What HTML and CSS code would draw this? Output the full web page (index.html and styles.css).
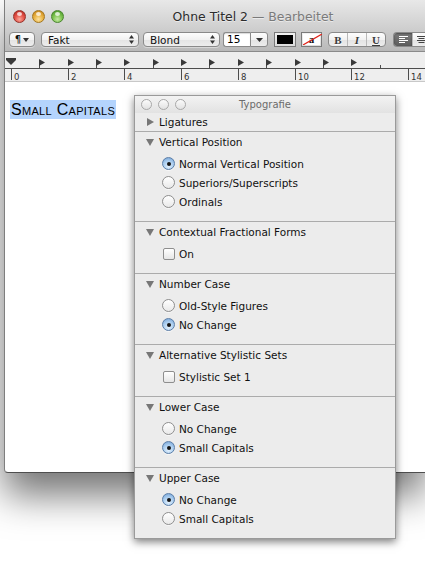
FILE: index.html
```html
<!DOCTYPE html>
<html lang="de">
<head>
<meta charset="utf-8">
<title>Ohne Titel 2 — Bearbeitet</title>
<link rel="stylesheet" href="styles.css">
</head>
<body>
<div class="desktop">
  <div class="window">
    <div class="chrome">
      <div class="titlebar">
        <div class="lights"><span class="light red"></span><span class="light yellow"></span><span class="light green"></span></div>
        <div class="title">Ohne Titel 2 <span class="edited">— Bearbeitet</span></div>
      </div>
      <div class="toolbar">
        <div class="btn para">¶<svg class="caret" width="6" height="4" viewBox="0 0 6 4"><polygon points="0,0 6,0 3,4" fill="#333"/></svg></div>
        <div class="btn popup fam"><span>Fakt</span><svg class="updown" width="5" height="9" viewBox="0 0 5 9"><polygon points="0,3.5 2.5,0 5,3.5" fill="#333"/><polygon points="0,5.5 5,5.5 2.5,9" fill="#333"/></svg></div>
        <div class="btn popup sty"><span>Blond</span><svg class="updown" width="5" height="9" viewBox="0 0 5 9"><polygon points="0,3.5 2.5,0 5,3.5" fill="#333"/><polygon points="0,5.5 5,5.5 2.5,9" fill="#333"/></svg></div>
        <div class="combo"><span class="combo-field">15</span><span class="combo-btn"><svg width="7" height="4" viewBox="0 0 7 4"><polygon points="0,0 7,0 3.5,4" fill="#333"/></svg></span></div>
        <div class="well well-black"><span class="swatch"></span></div>
        <div class="well well-none"><span class="swatch-none">a<svg class="slash" width="19" height="11" viewBox="0 0 19 11"><line x1="0" y1="11" x2="19" y2="0" stroke="#e2241b" stroke-width="1.2"/></svg></span></div>
        <div class="seg biu"><span class="b">B</span><span class="i">I</span><span class="u">U</span></div>
        <div class="seg align">
          <span class="on"><svg width="9" height="7" viewBox="0 0 9 7"><g fill="#fff"><rect x="0" y="0" width="9" height="1"/><rect x="0" y="2" width="6" height="1"/><rect x="0" y="4" width="9" height="1"/><rect x="0" y="6" width="6" height="1"/></g></svg></span>
          <span><svg width="9" height="7" viewBox="0 0 9 7"><g fill="#444"><rect x="0" y="0" width="9" height="1"/><rect x="1.5" y="2" width="6" height="1"/><rect x="0" y="4" width="9" height="1"/><rect x="1.5" y="6" width="6" height="1"/></g></svg></span>
        </div>
      </div>
    </div>
    <div class="ruler">
      <svg width="420" height="29" viewBox="0 0 420 29">
        <line x1="0" y1="16.5" x2="420" y2="16.5" stroke="#4d4d4d" stroke-width="1"/>
        <g stroke="#4d4d4d" stroke-width="1">
          <line x1="6.5" y1="16" x2="6.5" y2="28"/>
          <line x1="63.5" y1="16" x2="63.5" y2="28"/>
          <line x1="119.5" y1="16" x2="119.5" y2="28"/>
          <line x1="176.5" y1="16" x2="176.5" y2="28"/>
          <line x1="233.5" y1="16" x2="233.5" y2="28"/>
          <line x1="290.5" y1="16" x2="290.5" y2="28"/>
          <line x1="346.5" y1="16" x2="346.5" y2="28"/>
          <line x1="403.5" y1="16" x2="403.5" y2="28"/>
          <line x1="34.5" y1="13" x2="34.5" y2="16"/>
          <line x1="91.5" y1="13" x2="91.5" y2="16"/>
          <line x1="148.5" y1="13" x2="148.5" y2="16"/>
          <line x1="204.5" y1="13" x2="204.5" y2="16"/>
          <line x1="261.5" y1="13" x2="261.5" y2="16"/>
          <line x1="318.5" y1="13" x2="318.5" y2="16"/>
          <line x1="375.5" y1="13" x2="375.5" y2="16"/>
        </g>
        <g class="ruler-num">
          <text x="9" y="28">0</text>
          <text x="66" y="28">2</text>
          <text x="122" y="28">4</text>
          <text x="179" y="28">6</text>
          <text x="236" y="28">8</text>
          <text x="293" y="28">10</text>
          <text x="349" y="28">12</text>
          <text x="406" y="28">14</text>
        </g>
        <g fill="#3a3a3a">
          <rect x="1" y="6" width="10" height="2"/>
          <polygon points="1,8 11,8 6,13"/>
          <polygon points="34,7 40,10.5 34,14"/>
          <polygon points="63,7 69,10.5 63,14"/>
          <polygon points="91,7 97,10.5 91,14"/>
          <polygon points="119,7 125,10.5 119,14"/>
          <polygon points="148,7 154,10.5 148,14"/>
          <polygon points="176,7 182,10.5 176,14"/>
          <polygon points="204,7 210,10.5 204,14"/>
          <polygon points="233,7 239,10.5 233,14"/>
          <polygon points="261,7 267,10.5 261,14"/>
          <polygon points="290,7 296,10.5 290,14"/>
          <polygon points="318,7 324,10.5 318,14"/>
          <polygon points="346,7 352,10.5 346,14"/>
        </g>
      </svg>
    </div>
    <div class="doc"><span class="smallcaps">Small Capitals</span></div>
  </div>
</div>

<div class="panel">
  <div class="ptitlebar">
    <div class="plights"><span></span><span></span><span></span></div>
    <div class="ptitle">Typografie</div>
    <div class="pspacer"></div>
  </div>
  <div class="lig">
    <svg class="tri" width="8" height="8" viewBox="0 0 8 8"><polygon points="1,0 8,4 1,8"/></svg>Ligatures
  </div>
  <div class="section">
    <div class="shead"><svg class="tri" width="8" height="8" viewBox="0 0 8 8"><polygon points="0,1 8,1 4,8"/></svg>Vertical Position</div>
    <div class="opts">
      <div class="opt"><span class="radio on"></span>Normal Vertical Position</div>
      <div class="opt"><span class="radio"></span>Superiors/Superscripts</div>
      <div class="opt"><span class="radio"></span>Ordinals</div>
    </div>
  </div>
  <div class="section">
    <div class="shead"><svg class="tri" width="8" height="8" viewBox="0 0 8 8"><polygon points="0,1 8,1 4,8"/></svg>Contextual Fractional Forms</div>
    <div class="opts">
      <div class="opt"><span class="check"></span>On</div>
    </div>
  </div>
  <div class="section">
    <div class="shead"><svg class="tri" width="8" height="8" viewBox="0 0 8 8"><polygon points="0,1 8,1 4,8"/></svg>Number Case</div>
    <div class="opts">
      <div class="opt"><span class="radio"></span>Old-Style Figures</div>
      <div class="opt"><span class="radio on"></span>No Change</div>
    </div>
  </div>
  <div class="section">
    <div class="shead"><svg class="tri" width="8" height="8" viewBox="0 0 8 8"><polygon points="0,1 8,1 4,8"/></svg>Alternative Stylistic Sets</div>
    <div class="opts">
      <div class="opt"><span class="check"></span>Stylistic Set 1</div>
    </div>
  </div>
  <div class="section">
    <div class="shead"><svg class="tri" width="8" height="8" viewBox="0 0 8 8"><polygon points="0,1 8,1 4,8"/></svg>Lower Case</div>
    <div class="opts">
      <div class="opt"><span class="radio"></span>No Change</div>
      <div class="opt"><span class="radio on"></span>Small Capitals</div>
    </div>
  </div>
  <div class="section">
    <div class="shead"><svg class="tri" width="8" height="8" viewBox="0 0 8 8"><polygon points="0,1 8,1 4,8"/></svg>Upper Case</div>
    <div class="opts">
      <div class="opt"><span class="radio on"></span>No Change</div>
      <div class="opt"><span class="radio"></span>Small Capitals</div>
    </div>
  </div>
</div>
</body>
</html>
```

FILE: styles.css
```css
* { box-sizing: border-box; }

body {
  margin: 0;
  width: 425px;
  height: 566px;
  overflow: hidden;
  background: #ffffff;
  position: relative;
  font-family: "DejaVu Sans", "Noto Sans", sans-serif;
  color: #000;
}

.desktop {
  padding-left: 4px;
}

.window {
  width: 421px;
  height: 473px;
  border: 1px solid #7e7e7e;
  border-top: none;
  border-right: none;
  border-bottom-color: #4e4e4e;
  border-radius: 0 0 0 4px;
  display: flex;
  flex-direction: column;
  background: #fff;
  box-shadow: 0 22px 38px rgba(0, 0, 0, 0.55);
  overflow: hidden;
}

.chrome {
  height: 52px;
  flex: none;
  background: linear-gradient(#e8e8e8, #cfcfcf 55%, #b9b9b9);
  border-bottom: 1px solid #8b8b8b;
}

.titlebar {
  height: 27px;
  padding-top: 5px;
  display: flex;
  align-items: center;
}

.lights {
  width: 59px;
  padding-left: 8px;
  display: flex;
  gap: 6px;
  flex: none;
}

.light {
  width: 13px;
  height: 13px;
  border-radius: 50%;
  position: relative;
}

.light::after {
  content: "";
  position: absolute;
  left: 3px;
  top: 1px;
  width: 5px;
  height: 4px;
  border-radius: 50%;
  background: rgba(255, 255, 255, 0.75);
}

.light.red {
  background: radial-gradient(circle at 50% 75%, #f9a89a 0%, #e6554a 45%, #b92a22 90%);
  border: 1px solid #963129;
}

.light.yellow {
  background: radial-gradient(circle at 50% 75%, #fbe2a0 0%, #eab444 45%, #c7851a 90%);
  border: 1px solid #a3761f;
}

.light.green {
  background: radial-gradient(circle at 50% 75%, #c6eaa6 0%, #80c552 45%, #4a9a28 90%);
  border: 1px solid #4b8630;
}

.title {
  flex: 1;
  text-align: center;
  padding-left: 17px;
  font-size: 12.4px;
  color: #2b2b2b;
  text-shadow: 0 1px 0 rgba(255, 255, 255, 0.5);
  white-space: nowrap;
}

.edited {
  color: #7a7a7a;
}

.toolbar {
  height: 24px;
  display: flex;
  align-items: flex-start;
  padding: 5px 0 0 4px;
  font-size: 10.5px;
  overflow: hidden;
}

.btn {
  height: 15px;
  border: 1px solid #8a8a8a;
  border-radius: 4px;
  background: linear-gradient(#fdfdfd, #f2f2f2 50%, #e3e3e3 51%, #ededed);
  box-shadow: 0 1px 0 rgba(255, 255, 255, 0.4);
  display: flex;
  align-items: center;
  color: #111;
  flex: none;
}

.para {
  width: 26px;
  justify-content: center;
  gap: 2px;
  font-size: 10px;
}

.popup {
  justify-content: space-between;
  padding: 0 4px 0 6px;
}

.fam {
  width: 98px;
  margin-left: 6px;
}

.sty {
  width: 77px;
  margin-left: 4px;
}

.combo {
  margin-left: 3px;
  display: flex;
  height: 15px;
  flex: none;
}

.combo-field {
  width: 27px;
  height: 15px;
  border: 1px solid #8a8a8a;
  border-right: none;
  border-radius: 3px 0 0 3px;
  background: #fff;
  box-shadow: inset 0 1px 1px rgba(0, 0, 0, 0.15);
  padding-left: 3px;
  line-height: 13px;
}

.combo-btn {
  width: 18px;
  height: 15px;
  border: 1px solid #8a8a8a;
  border-radius: 0 3px 3px 0;
  background: linear-gradient(#fdfdfd, #f2f2f2 50%, #e3e3e3 51%, #ededed);
  display: flex;
  align-items: center;
  justify-content: center;
}

.well {
  height: 15px;
  border: 1px solid #7a7a7a;
  background: linear-gradient(#f2f2f2, #dcdcdc);
  padding: 2px;
  display: flex;
  flex: none;
}

.well-black {
  width: 22px;
  margin-left: 6px;
}

.swatch {
  flex: 1;
  background: #000;
}

.well-none {
  width: 21px;
  margin-left: 5px;
  padding: 1px;
}

.swatch-none {
  flex: 1;
  background: #fff;
  position: relative;
  text-align: center;
  font-family: "Liberation Serif", serif;
  font-weight: bold;
  font-size: 11px;
  line-height: 11px;
  color: #111;
}

.slash {
  position: absolute;
  left: 0;
  top: 0;
}

.seg {
  height: 15px;
  border: 1px solid #8a8a8a;
  border-radius: 4px;
  background: linear-gradient(#fdfdfd, #f2f2f2 50%, #e3e3e3 51%, #ededed);
  display: flex;
  overflow: hidden;
  flex: none;
}

.seg > span {
  flex: 1;
  display: flex;
  align-items: center;
  justify-content: center;
}

.seg > span + span {
  border-left: 1px solid #b8b8b8;
}

.biu {
  width: 58px;
  margin-left: 6px;
  font-family: "Liberation Serif", serif;
  font-size: 11px;
  color: #3c3c3c;
  text-shadow: 0 1px 0 #fff;
}

.biu .b { font-weight: bold; }
.biu .i { font-style: italic; font-weight: bold; }
.biu .u { text-decoration: underline; font-weight: bold; }

.align {
  width: 32px;
  margin-left: 7px;
  border-radius: 4px 0 0 4px;
  border-right: none;
}

.align > span {
  flex: none;
  width: 18px;
}

.align .on {
  background: linear-gradient(#7c7c7c, #5c5c5c);
  box-shadow: inset 0 1px 2px rgba(0, 0, 0, 0.4);
}

.ruler {
  height: 30px;
  flex: none;
  background: #eeeeee;
  border-bottom: 1px solid #c8c8c8;
}

.ruler svg {
  display: block;
}

.ruler-num text {
  font-family: "DejaVu Sans", sans-serif;
  font-size: 8.5px;
  fill: #333;
}

.doc {
  flex: 1;
  padding: 18px 0 0 5px;
}

.smallcaps {
  display: inline-block;
  font-family: "Liberation Sans", Arial, sans-serif;
  font-variant: small-caps;
  font-size: 16px;
  letter-spacing: 0.3px;
  line-height: 19px;
  background: #b4d4fd;
  padding: 0 1px;
}

/* Typografie panel */
.panel {
  position: absolute;
  left: 134px;
  top: 95px;
  width: 262px;
  border: 1px solid #9a9a9a;
  background: #ececec;
  box-shadow: 0 3px 8px rgba(0, 0, 0, 0.5);
  font-size: 10.5px;
  color: #111;
}

.ptitlebar {
  height: 17px;
  display: flex;
  align-items: center;
  background: linear-gradient(#f3f3f3, #e2e2e2);
}

.plights {
  width: 51px;
  padding-left: 6px;
  display: flex;
  gap: 6px;
}

.plights span {
  width: 11px;
  height: 11px;
  border-radius: 50%;
  border: 1px solid #a8a8a8;
  background: linear-gradient(#fbfbfb, #e2e2e2);
}

.ptitle {
  flex: 1;
  text-align: center;
  color: #6b6b6b;
  font-size: 10px;
}

.pspacer {
  width: 51px;
}

.lig {
  height: 18px;
  display: flex;
  align-items: center;
  padding-left: 11px;
}

.tri {
  fill: #777;
  margin-right: 5px;
  flex: none;
}

.section {
  border-top: 1px solid #ababab;
  padding-bottom: 10px;
}

.shead {
  height: 19px;
  display: flex;
  align-items: center;
  padding-left: 11px;
}

.opts {
  padding: 3px 0 0 27px;
}

.opt {
  height: 19px;
  display: flex;
  align-items: center;
}

.radio {
  width: 13px;
  height: 13px;
  border-radius: 50%;
  margin-right: 4px;
  border: 1px solid #8e8e8e;
  background: linear-gradient(#ffffff, #e9e9e9);
  box-shadow: 0 1px 0 rgba(255, 255, 255, 0.6);
  display: flex;
  align-items: center;
  justify-content: center;
  flex: none;
}

.radio.on {
  border-color: #5b7ea8;
  background: radial-gradient(circle at 50% 75%, #e3f1fd 0%, #a7cbee 55%, #6f9dd2 100%);
}

.radio.on::after {
  content: "";
  width: 4px;
  height: 4px;
  border-radius: 50%;
  background: #151515;
}

.check {
  width: 12px;
  height: 12px;
  margin: 0 4px 0 1px;
  border: 1px solid #8e8e8e;
  border-radius: 2px;
  background: linear-gradient(#ffffff, #e6e6e6);
  flex: none;
}
```
